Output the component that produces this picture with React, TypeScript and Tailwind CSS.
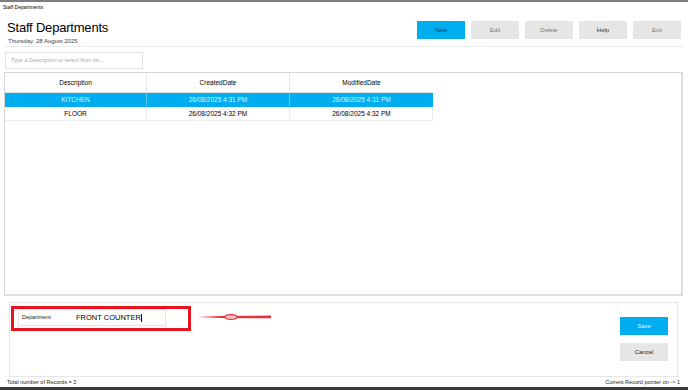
import React from "react";

const rows = [
  { desc: "KITCHEN", created: "26/08/2025 4:31 PM", modified: "26/08/2025 4:31 PM", selected: true },
  { desc: "FLOOR", created: "26/08/2025 4:32 PM", modified: "26/08/2025 4:32 PM", selected: false },
];

const topButtons = ["New", "Edit", "Delete", "Help", "Exit"];

function Arrow() {
  return (
    <svg width="76" height="8" viewBox="0 0 76 8" className="mt-[7px] ml-[6px]">
      <path d="M0 4 L24 3 L74 2.6 L74 5.2 L24 5 Z" fill="#e8313c" />
      <ellipse cx="34" cy="4" rx="6" ry="2.4" fill="#f6c3c6" stroke="#e8313c" strokeWidth="1.2" />
    </svg>
  );
}

export default function App() {
  return (
    <div
      className="w-[688px] h-[390px] bg-white flex flex-col overflow-hidden text-black"
      style={{ fontFamily: '"Liberation Sans", Arial, sans-serif' }}
    >
      {/* Window title */}
      <div className="border-t-2 border-[#7d7d7d] h-[14px] flex items-center pl-[3px] text-[5px]">
        Staff Departments
      </div>

      {/* Header */}
      <div className="h-[32px] flex justify-between px-[7px]">
        <div className="pt-[6px]">
          <div className="text-[13px] leading-[16px] tracking-[-0.2px]">Staff Departments</div>
          <div className="text-[6px] leading-[8px] text-[#444] ml-[1px] mt-[1px]">Thursday, 28 August 2025</div>
        </div>
        <div className="flex gap-[6px] pt-[7px]">
          {topButtons.map((b, i) => (
            <div
              key={b}
              className={`w-[48px] h-[18px] flex items-center justify-center text-[6px] ${
                i === 0 ? "bg-[#00aef0] text-[#0a3a5a]" : b === "Help" ? "bg-[#e6e6e6] text-[#333]" : "bg-[#e6e6e6] text-[#777]"
              }`}
            >
              {b}
            </div>
          ))}
        </div>
      </div>
      <div className="mx-[4px] border-t border-[#ececec]" />

      {/* Search */}
      <div className="mt-[5px] ml-[5px] w-[138px] h-[17px] border border-[#e2e2e2] flex items-center pl-[5px] text-[5.5px] text-[#aaa]">
        Type a Description or select from list...
      </div>

      {/* Grid */}
      <div className="mt-[3px] ml-[4px] w-[679px] h-[224px] shrink-0 border border-[#d8d8d8] border-r-2 border-b-2 border-r-[#dedede] border-b-[#dedede]">
        <div className="w-[428px] text-[6.5px]">
          <div className="grid grid-cols-[142px_143px_143px] h-[20px] border-b border-[#e4e4e4]">
            <div className="flex items-center justify-center border-r border-[#e6e6e6]">Description</div>
            <div className="flex items-center justify-center border-r border-[#e6e6e6]">CreatedDate</div>
            <div className="flex items-center justify-center">ModifiedDate</div>
          </div>
          {rows.map((r) => (
            <div
              key={r.desc}
              className={`grid grid-cols-[142px_143px_143px] h-[14px] border-b border-r ${
                r.selected ? "bg-[#00aef0] text-[#dff4ff] border-[#00aef0]" : "border-[#ececec]"
              }`}
            >
              <div className={`flex items-center justify-center border-r ${r.selected ? "border-[#5cccf5]" : "border-[#ececec]"}`}>
                {r.desc}
              </div>
              <div className={`flex items-center justify-center border-r ${r.selected ? "border-[#5cccf5]" : "border-[#ececec]"}`}>
                {r.created}
              </div>
              <div className="flex items-center justify-center">{r.modified}</div>
            </div>
          ))}
        </div>
      </div>

      {/* Edit panel */}
      <div className="mt-[6px] ml-[9px] w-[669px] h-[75px] shrink-0 border border-[#e6e6e6] flex justify-between">
        <div className="flex items-start pt-[3px] pl-[1px]">
          <div className="w-[180px] h-[25px] border-[3px] border-[#e5141f] pl-[4px]">
            <div className="w-[148px] h-[17px] border border-[#e4e4e4] flex items-center">
              <span className="text-[5.5px] w-[57px] pl-[3px] text-[#222]">Department</span>
              <span className="text-[7.5px]">FRONT COUNTER</span>
              <span className="w-[0.5px] h-[8px] bg-black" />
            </div>
          </div>
          <Arrow />
        </div>
        <div className="flex flex-col gap-[8px] pt-[14px] pr-[9px]">
          <div className="w-[48px] h-[18px] bg-[#00aef0] text-[#dff4ff] text-[6px] flex items-center justify-center">Save</div>
          <div className="w-[48px] h-[18px] bg-[#e6e6e6] text-[#222] text-[6px] flex items-center justify-center">Cancel</div>
        </div>
      </div>

      {/* Footer */}
      <div className="flex-1 flex justify-between items-end pb-[1px] px-[7px] text-[5.5px] leading-[7px] text-[#222]">
        <span>Total number of Records = 2</span>
        <span className="mr-[1px]">Current Record pointer on -&gt; 1</span>
      </div>
      <div className="h-[3px] bg-[#3a3a3a]" />
    </div>
  );
}
